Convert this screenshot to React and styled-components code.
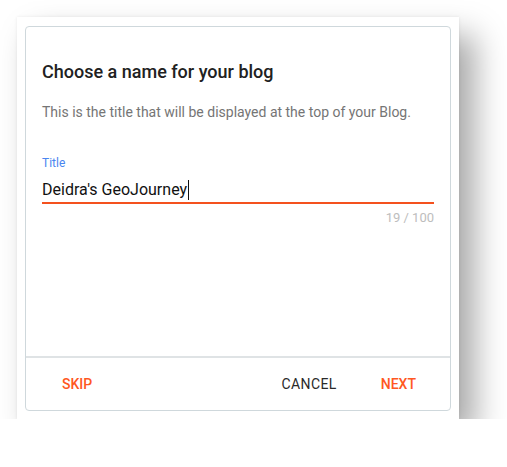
import React, { useState } from 'react';
import styled, { createGlobalStyle } from 'styled-components';

const GlobalStyle = createGlobalStyle`
  html, body {
    margin: 0;
    padding: 0;
    background: #ffffff;
    font-family: Roboto, "Liberation Sans", Arial, sans-serif;
  }
`;

const MAX_LENGTH = 100;

const App = () => {
  const [blogName, setBlogName] = useState("Deidra's GeoJourney");

  return (
    <Page>
      <GlobalStyle />
      <Sheet>
        <Dialog>
          <Body>
            <Heading>Choose a name for your blog</Heading>
            <Description>
              This is the title that will be displayed at the top of your Blog.
            </Description>
            <Field>
              <Label htmlFor="blog-title">Title</Label>
              <InputRow>
                <TextValue>{blogName}</TextValue>
                <Caret />
              </InputRow>
              <Underline />
              <Counter>{`${blogName.length} / ${MAX_LENGTH}`}</Counter>
            </Field>
          </Body>
          <Footer>
            <FooterButton accent onClick={() => setBlogName(blogName)}>Skip</FooterButton>
            <Spacer />
            <FooterButton gapRight>Cancel</FooterButton>
            <FooterButton accent>Next</FooterButton>
          </Footer>
        </Dialog>
      </Sheet>
    </Page>
  );
};

const Page = styled.div`
  padding: 17px 0 0 17px;
`;

const Sheet = styled.div`
  width: 426px;
  height: 385px;
  padding: 9px 8px 8px 8px;
  background: #ffffff;
  box-shadow: 0 0 3px rgba(0, 0, 0, 0.08), 16px 18px 30px rgba(0, 0, 0, 0.34);
`;

const Dialog = styled.div`
  display: flex;
  flex-direction: column;
  height: 100%;
  box-sizing: border-box;
  border: 1px solid #cfd8dc;
  border-radius: 4px;
  overflow: hidden;
`;

const Body = styled.div`
  flex: 1;
  padding: 33px 16px 0 16px;
`;

const Heading = styled.h2`
  margin: 0;
  font-size: 18px;
  line-height: 24px;
  font-weight: 500;
  color: #212121;
`;

const Description = styled.p`
  margin: 18px 0 0 0;
  font-size: 14px;
  line-height: 20px;
  color: #757575;
`;

const Field = styled.div`
  margin-top: 33px;
  display: flex;
  flex-direction: column;
`;

const Label = styled.label`
  font-size: 12px;
  line-height: 16px;
  color: #4a86f0;
`;

const InputRow = styled.div`
  display: flex;
  align-items: flex-end;
  margin-top: 5px;
  height: 24px;
`;

const TextValue = styled.span`
  font-size: 16px;
  line-height: 20px;
  color: #111111;
`;

const Caret = styled.span`
  width: 1px;
  height: 20px;
  margin-left: 1px;
  background: #111111;
`;

const Underline = styled.div`
  margin-top: 2px;
  height: 2px;
  background: #f4511e;
`;

const Counter = styled.div`
  margin-top: 6px;
  text-align: right;
  font-size: 13px;
  line-height: 16px;
  color: #bdbdbd;
`;

const Footer = styled.div`
  display: flex;
  align-items: center;
  height: 52px;
  padding: 0 14px 0 16px;
  border-top: 2px solid #dfe3e5;
`;

const Spacer = styled.div`
  flex: 1;
`;

const FooterButton = styled.button`
  border: none;
  background: none;
  padding: 8px 20px;
  margin-right: ${props => (props.gapRight ? '4px' : '0')};
  font-family: Roboto, "Liberation Sans", Arial, sans-serif;
  font-size: 14px;
  font-weight: ${props => (props.accent ? 500 : 400)};
  letter-spacing: ${props => (props.accent ? '0' : '0.4px')};
  text-transform: uppercase;
  color: ${props => (props.accent ? '#ff5722' : '#2a2a2a')};
  cursor: pointer;
`;

export default App;
